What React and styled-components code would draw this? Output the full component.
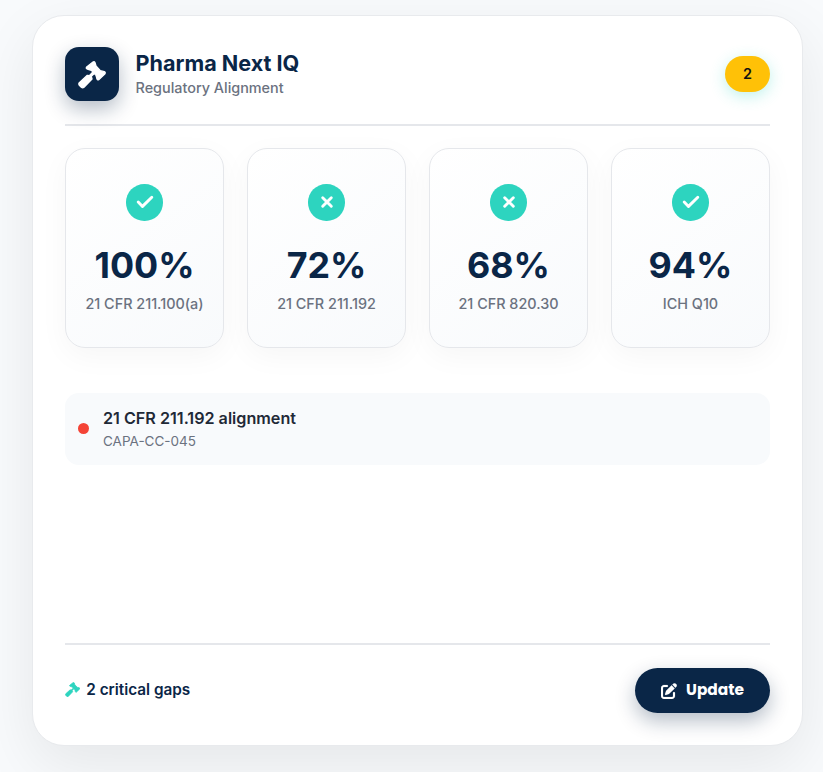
import React from "react";
import styled, { createGlobalStyle } from "styled-components";
import { FaPenToSquare } from "react-icons/fa6";

const standards = [
  { name: "21 CFR 211.100(a)", value: "100%", ok: true },
  { name: "21 CFR 211.192", value: "72%", ok: false },
  { name: "21 CFR 820.30", value: "68%", ok: false },
  { name: "ICH Q10", value: "94%", ok: true },
];

const gaps = [{ title: "21 CFR 211.192 alignment", code: "CAPA-CC-045" }];

const GavelIcon = () => (
  <svg
    viewBox="0 0 84 84"
    width="1em"
    height="1em"
    fill="currentColor"
    stroke="currentColor"
    strokeWidth="4"
    strokeLinejoin="round"
  >
    <path d="M26 18 45 3Q49 1 51 5L54 15 67 29 79 32Q83 34 81 38L62 56Q59 58 57 54L54 43 40 28 28 24Q23 22 26 18Z" />
    <path d="M28 43 34 44 44 34 48 38 40 46 42 54 18 79Q14 82 10 79L4 73Q1 69 4 65Z" />
  </svg>
);

const CheckIcon = () => (
  <svg viewBox="-9 -9 18 18" width="18" height="18">
    <path d="M-6.8 0-2.5 4.4 6.8-4.8" />
  </svg>
);

const CrossIcon = () => (
  <svg viewBox="-9 -9 18 18" width="18" height="18">
    <path d="M-4.3-4.3 4.3 4.3M4.3-4.3-4.3 4.3" />
  </svg>
);

const App = () => {
  return (
    <Page>
      <GlobalStyle />
      <Card>
        <Header>
          <Brand>
            <Logo>
              <GavelIcon />
            </Logo>
            <div>
              <Title>Pharma Next IQ</Title>
              <Subtitle>Regulatory Alignment</Subtitle>
            </div>
          </Brand>
          <Badge>2</Badge>
        </Header>
        <Metrics>
          {standards.map((item) => (
            <Metric key={item.name}>
              <Status>{item.ok ? <CheckIcon /> : <CrossIcon />}</Status>
              <Value>{item.value}</Value>
              <Label>{item.name}</Label>
            </Metric>
          ))}
        </Metrics>
        <GapList>
          {gaps.map((gap) => (
            <Gap key={gap.code}>
              <Dot />
              <div>
                <GapTitle>{gap.title}</GapTitle>
                <GapCode>{gap.code}</GapCode>
              </div>
            </Gap>
          ))}
        </GapList>
        <Footer>
          <Summary>
            <GavelIcon />
            2 critical gaps
          </Summary>
          <Button>
            <FaPenToSquare />
            Update
          </Button>
        </Footer>
      </Card>
    </Page>
  );
};

const GlobalStyle = createGlobalStyle`
  * {
    box-sizing: border-box;
  }
  body {
    margin: 0;
    background: #f8fafc;
    font-family: Inter, "Liberation Sans", sans-serif;
  }
`;

const Page = styled.div`
  height: 772px;
  padding: 15px 20px 0 32px;
  overflow: hidden;
`;

const Card = styled.section`
  display: flex;
  flex-direction: column;
  height: 731px;
  padding: 31px 32px 32px;
  background: #fff;
  border: 1px solid #e8eaed;
  border-radius: 32px;
  box-shadow: 0 20px 60px rgba(0, 0, 0, 0.08);
`;

const Header = styled.header`
  display: flex;
  align-items: flex-start;
  justify-content: space-between;
  height: 79px;
  border-bottom: 2px solid #e5e7eb;
`;

const Brand = styled.div`
  display: flex;
  gap: 16.5px;
`;

const Logo = styled.div`
  display: flex;
  align-items: center;
  justify-content: center;
  width: 54px;
  height: 54px;
  padding-top: 1px;
  border-radius: 14px;
  background: #0a2647;
  color: #fff;
  font-size: 28px;
  box-shadow: 0 8px 20px rgba(10, 38, 71, 0.3);
`;

const Title = styled.h3`
  margin: 2px 0 0;
  color: #0a2647;
  font-size: 21.6px;
  font-weight: 700;
  line-height: 29px;
`;

const Subtitle = styled.div`
  color: #6b7280;
  font-size: 14.4px;
  font-weight: 500;
  line-height: 20px;
`;

const Badge = styled.span`
  margin-top: 9px;
  width: 45px;
  height: 36px;
  border-radius: 18px;
  background: #ffc107;
  color: #111;
  font-size: 14.4px;
  font-weight: 600;
  line-height: 36px;
  text-align: center;
  box-shadow: 0 4px 15px rgba(45, 212, 191, 0.3);
`;

const Metrics = styled.div`
  display: grid;
  grid-template-columns: repeat(4, 1fr);
  gap: 23px;
  margin-top: 22px;
`;

const Metric = styled.div`
  display: flex;
  flex-direction: column;
  align-items: center;
  height: 200px;
  padding-top: 35px;
  background: linear-gradient(145deg, #fff, #f8fafc);
  border: 1px solid #e5e7eb;
  border-radius: 20px;
  box-shadow: 0 8px 30px rgba(0, 0, 0, 0.04);
`;

const Status = styled.div`
  display: flex;
  align-items: center;
  justify-content: center;
  width: 36.5px;
  height: 36.5px;
  border-radius: 50%;
  background: #2dd4bf;

  svg {
    fill: none;
    stroke: #fff;
    stroke-width: 2.9;
    stroke-linecap: round;
    stroke-linejoin: round;
  }
`;

const Value = styled.div`
  margin-top: 23.5px;
  color: #0a2647;
  font-size: 35.8px;
  font-weight: 700;
  line-height: 42px;
`;

const Label = styled.div`
  margin-top: 8px;
  color: #6b7280;
  font-size: 14.4px;
  font-weight: 500;
  line-height: 20px;
  white-space: nowrap;
`;

const GapList = styled.div`
  flex: 1;
  margin-top: 45px;
`;

const Gap = styled.div`
  display: flex;
  align-items: center;
  gap: 14px;
  height: 72px;
  padding: 0 13px;
  background: #f8fafc;
  border-radius: 14px;
`;

const Dot = styled.span`
  width: 11px;
  height: 11px;
  margin-bottom: 2px;
  border-radius: 50%;
  background: #f44336;
`;

const GapTitle = styled.div`
  color: #1f2937;
  font-size: 16.15px;
  font-weight: 600;
  line-height: 24px;
`;

const GapCode = styled.div`
  color: #6b7280;
  font-size: 13.5px;
  line-height: 22px;
`;

const Footer = styled.footer`
  display: flex;
  align-items: center;
  justify-content: space-between;
  padding-top: 23px;
  border-top: 2px solid #e5e7eb;
`;

const Summary = styled.div`
  display: flex;
  align-items: center;
  gap: 6px;
  margin-bottom: 2px;
  color: #0a2647;
  font-size: 15.3px;
  font-weight: 600;

  svg {
    color: #2dd4bf;
  }
`;

const Button = styled.button`
  display: flex;
  align-items: center;
  justify-content: center;
  gap: 9px;
  width: 135px;
  height: 45px;
  padding: 0 0 2px;
  border: none;
  border-radius: 23px;
  background: #0a2647;
  color: #fff;
  font-family: Poppins, Inter, sans-serif;
  font-size: 15.4px;
  font-weight: 700;
  box-shadow: 0 8px 20px rgba(10, 38, 71, 0.3);

  svg {
    margin-top: 2px;
    font-size: 16px;
    stroke: #fff;
    stroke-width: 5;
  }
`;

export default App;
